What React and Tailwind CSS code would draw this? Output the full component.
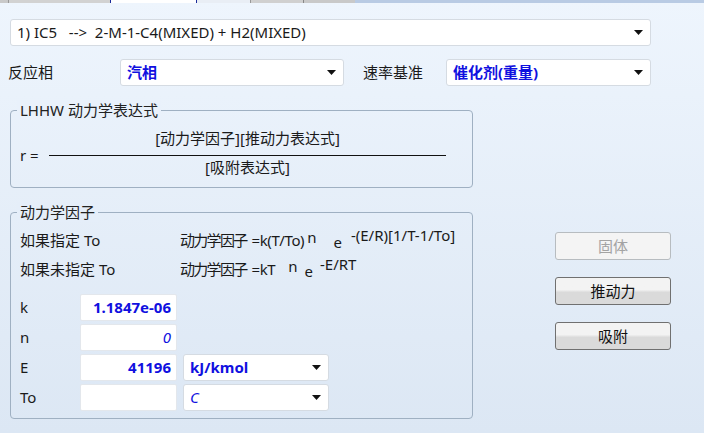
import React from 'react'

const font = { fontFamily: '"Noto Sans", "Noto Sans CJK SC", sans-serif' }

function Caret() {
  return (
    <svg width="9" height="5" viewBox="0 0 9 5" className="shrink-0">
      <path d="M0 0 H9 L4.5 5 Z" fill="#111" />
    </svg>
  )
}

function Select({ value, className = '', textClass = 'text-[#1010e0] font-bold' }) {
  return (
    <div className={`flex items-center justify-between rounded-[3px] border border-[#d5dbe2] bg-white pl-[6px] pr-[7px] ${className}`}>
      <span className={`whitespace-pre ${textClass}`}>{value}</span>
      <Caret />
    </div>
  )
}

function Field({ value, italic }) {
  return (
    <div
      className={`flex h-[27px] w-[97px] items-center justify-end rounded-[2px] border border-[#e3e7ec] bg-white pr-[5px] text-[#1010e0] ${
        italic ? 'italic' : 'font-bold'
      }`}
    >
      {value}
    </div>
  )
}

function Group({ title, className = '', bg, children }) {
  return (
    <div className={`relative rounded-[4px] border border-[#9fb0c2] ${className}`}>
      <div className={`absolute -top-[11px] left-[6px] px-[3px] leading-[20px] text-[#222] ${bg}`}>{title}</div>
      {children}
    </div>
  )
}

function Button({ label, disabled }) {
  return (
    <div
      className={`flex h-[28px] w-[116px] items-center justify-center rounded-[3px] border ${
        disabled
          ? 'border-[#b7bcc0] bg-[#f4f4f4] text-[#a3a3a3]'
          : 'border-[#707070] bg-gradient-to-b from-[#f3f3f3] from-45% to-[#dadada] to-55% text-[#111]'
      }`}
    >
      {label}
    </div>
  )
}

export default function App() {
  return (
    <div
      style={font}
      className="relative h-[433px] w-[704px] overflow-hidden bg-gradient-to-b from-[#eef5fd] to-[#dce7f4] text-[15px] text-[#1a1a1a]"
    >
      {/* tab strip */}
      <div className="flex h-[3px]">
        <div className="w-[8px] bg-[#c9c9c9]" />
        <div className="w-[102px] border-l border-[#999] bg-[#d2d2d2]" />
        <div className="w-[87px] border-x border-[#1a2a9a] bg-white" />
        <div className="w-[53px] bg-[#e9eef5]" />
        <div className="w-[53px] border-l border-[#999] bg-[#d0d0d0]" />
        <div className="w-[52px] border-l border-[#888] bg-[#c9c9c9]" />
        <div className="flex-1 bg-[#b9cbe4]" />
      </div>

      <div className="px-[10px] pt-[16px]">
        <Select
          value="1) IC5   -->  2-M-1-C4(MIXED) + H2(MIXED)"
          textClass="text-[#1a1a1a]"
          className="h-[27px] w-[641px] pl-[5px]"
        />

        <div className="mt-[13px] flex h-[27px] items-center">
          <span className="ml-[-2px] w-[112px]">反应相</span>
          <Select value="汽相" className="h-[27px] w-[224px]" />
          <span className="ml-[19px] w-[83px]">速率基准</span>
          <Select value="催化剂(重量)" className="h-[27px] w-[205px]" />
        </div>
      </div>

      <Group title="LHHW 动力学表达式" bg="bg-[#e9f1fb]" className="ml-[10px] mt-[24px] h-[78px] w-[463px]">
        <div className="flex h-full items-start pl-[9px]">
          <span className="mt-[34px] w-[29px] leading-[20px]">r =</span>
          <div className="flex w-[397px] flex-col items-center pt-[17px]">
            <span className="leading-[20px]">[动力学因子][推动力表达式]</span>
            <div className="mt-[7px] h-px w-full bg-[#111]" />
            <span className="mt-[1px] leading-[20px]">[吸附表达式]</span>
          </div>
        </div>
      </Group>

      <div className="mt-[24px] flex">
        <Group title="动力学因子" bg="bg-[#e5eef9]" className="ml-[10px] h-[207px] w-[463px]">
          <div className="pl-[9px] pt-[16px]">
            <div className="flex h-[22px] items-center">
              <span className="w-[160px]">如果指定 To</span>
              <span className="tracking-[-1.7px]">动力学因子</span>
              <span className="ml-[5px] tracking-[-0.4px]">=k(T/To)</span>
              <span className="relative -top-[3px] ml-[3px]">n</span>
              <span className="relative top-[2px] ml-[17px]">e</span>
              <span className="relative -top-[5px] ml-[9px]">-(E/R)[1/T-1/To]</span>
            </div>
            <div className="mt-[7px] flex h-[22px] items-center">
              <span className="w-[160px]">如果未指定 To</span>
              <span className="tracking-[-1.7px]">动力学因子</span>
              <span className="ml-[5px] tracking-[-0.4px]">=kT</span>
              <span className="relative -top-[3px] ml-[13px]">n</span>
              <span className="relative top-[2px] ml-[7px]">e</span>
              <span className="relative -top-[5px] ml-[7px]">-E/RT</span>
            </div>

            <div className="mt-[14px] flex flex-col gap-[3px]">
              <div className="flex items-center">
                <span className="w-[60px]">k</span>
                <Field value="1.1847e-06" />
              </div>
              <div className="flex items-center">
                <span className="w-[60px]">n</span>
                <Field value="0" italic />
              </div>
              <div className="flex items-center">
                <span className="w-[60px]">E</span>
                <Field value="41196" />
                <Select value="kJ/kmol" className="ml-[6px] h-[27px] w-[146px]" />
              </div>
              <div className="flex items-center">
                <span className="w-[60px]">To</span>
                <Field value="" />
                <Select value="C" textClass="italic text-[#1010e0]" className="ml-[6px] h-[27px] w-[146px]" />
              </div>
            </div>
          </div>
        </Group>

        <div className="ml-[82px] flex flex-col gap-[17px] pt-[20px]">
          <Button label="固体" disabled />
          <Button label="推动力" />
          <Button label="吸附" />
        </div>
      </div>
    </div>
  )
}
